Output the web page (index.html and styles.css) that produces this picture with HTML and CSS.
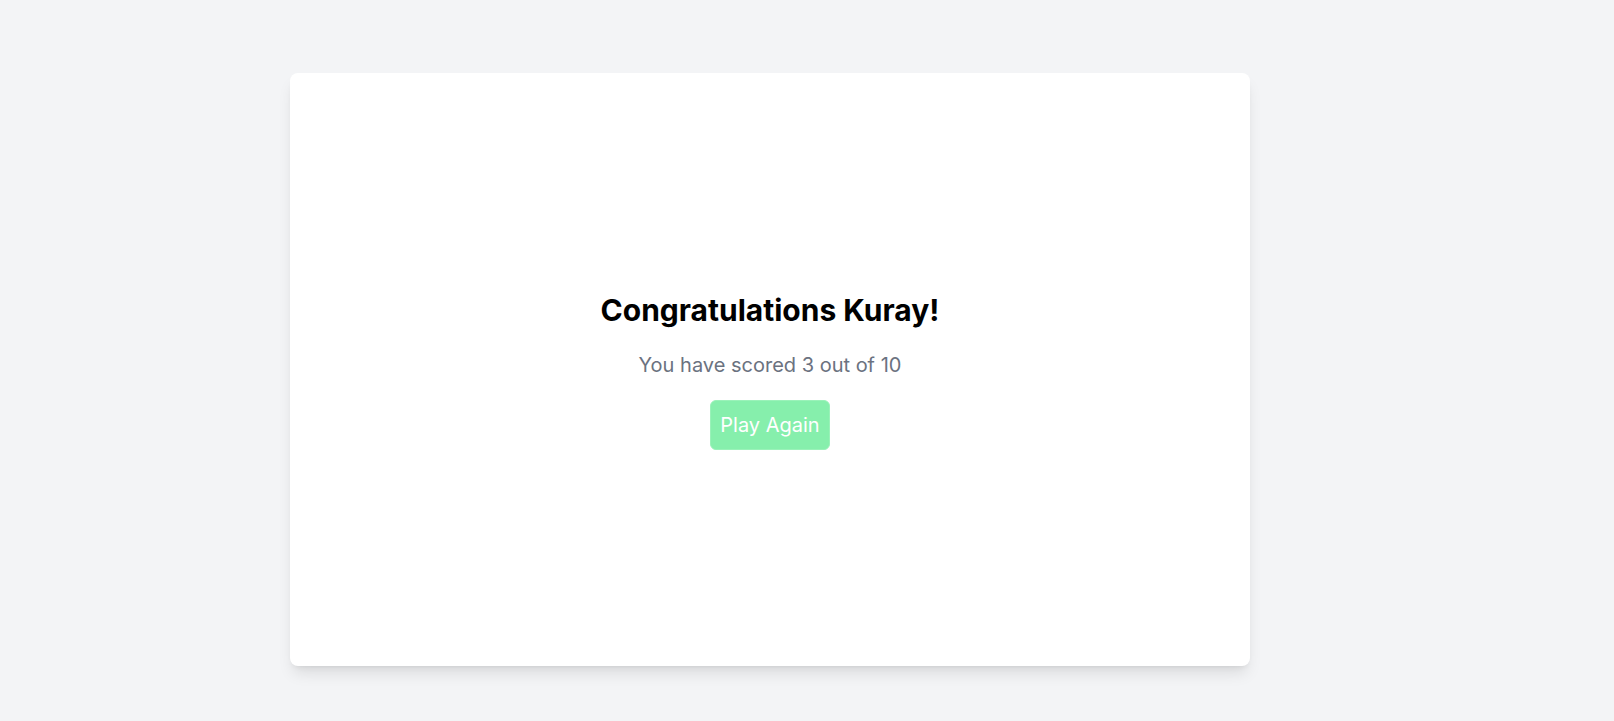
FILE: index.html
```html
<!DOCTYPE html>
<html>
<head>
<meta charset="utf-8">
<link rel="stylesheet" href="styles.css">
</head>
<body>
<main class="page">
  <section class="card">
    <h1 class="title">Congratulations Kuray!</h1>
    <p class="score">You have scored 3 out of 10</p>
    <button class="play">Play Again</button>
  </section>
</main>
</body>
</html>
```
FILE: styles.css
```css
html, body {
  margin: 0;
  padding: 0;
  background: #f3f4f6;
  font-family: Inter, "Noto Sans", sans-serif;
  overflow: hidden;
}
.page {
  box-sizing: border-box;
  width: 1614px;
  height: 721px;
  padding: 73px 0 0 290px;
}
.card {
  box-sizing: border-box;
  width: 960px;
  height: 593px;
  padding-top: 2px;
  background: #ffffff;
  border-radius: 8px;
  box-shadow: 0 10px 15px -3px rgba(0,0,0,0.1), 0 4px 6px -4px rgba(0,0,0,0.1);
  display: flex;
  flex-direction: column;
  align-items: center;
  justify-content: center;
}
.title {
  margin: 0;
  font-size: 30px;
  line-height: 36px;
  font-weight: 700;
  color: #000;
}
.score {
  margin: 23px 0 0;
  font-size: 20px;
  line-height: 28px;
  color: #6b7280;
}
.play {
  margin-top: 21px;
  font-family: inherit;
  font-size: 20px;
  line-height: 28px;
  color: #ffffff;
  background: #86efac;
  border: 1px solid #9af2b9;
  border-radius: 6px;
  padding: 10px 9px 10px;
  cursor: pointer;
}
```
